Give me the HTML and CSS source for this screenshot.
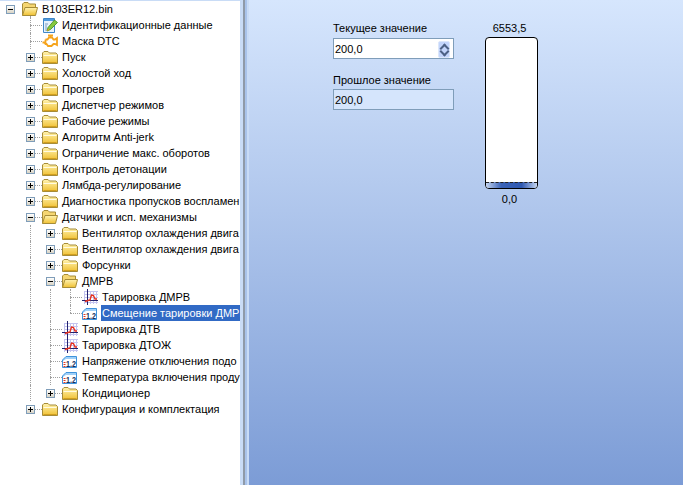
FILE: index.html
```html
<!DOCTYPE html>
<html lang="ru">
<head>
    <meta charset="UTF-8">
    <meta name="viewport" content="width=device-width, initial-scale=1.0">
    <title>B103ER12.bin</title>
    <link rel="stylesheet" href="styles.css">
</head>
<body>
    <svg class="defs" width="0" height="0">
        <defs>
            <linearGradient id="folderFill" x1="0" y1="0" x2="0" y2="1">
                <stop offset="0" stop-color="#fff3b0"/>
                <stop offset="1" stop-color="#f0c032"/>
            </linearGradient>
            <symbol id="folder" viewBox="0 0 16 16">
                <path d="M.5 14.5V4L2 2.5H6L7.5 4H14L15.5 5.5V14.5Z" fill="url(#folderFill)" stroke="#a68c38"/>
                <path d="M1.5 6.5H14.5" stroke="#fffbe2"/>
                <path d="M1.5 13.5H14.5" stroke="#d29f1e"/>
            </symbol>
            <symbol id="folderOpen" viewBox="0 0 16 16">
                <path d="M.5 14.5V3L2 1.5H6L7.5 3H13.5V7" fill="#f5d672" stroke="#a68c38"/>
                <path d="M.5 14.5L3 6.5H15.5L13.5 14.5Z" fill="url(#folderFill)" stroke="#a68c38"/>
            </symbol>
            <symbol id="form" viewBox="0 0 16 16">
                <path d="M1.5 1.5H12.5V15.5H1.5Z" fill="#e6f1fc" stroke="#3f86c8"/>
                <path d="M2 2H12V4H2Z" fill="#4f9ade"/>
                <path d="M3 7H6M3 9H5M3 11H5M3 13H7" stroke="#7a9cc0"/>
                <path d="M5 14L6 10.5L12.5 3L15.5 5.5L8.5 12.5Z" fill="#86c83e" stroke="#3c8a1e" stroke-width=".8"/>
                <path d="M5 14L6 11.5L7.5 13Z" fill="#e8a41c"/>
            </symbol>
            <symbol id="engine" viewBox="0 0 16 16">
                <path d="M3.5 6.5H5.5L7 4.5H10L11.5 6.5H13L15 5V12L13 11H11.5L9.5 13H6L4.5 11H3.5L2.5 9.5H0.5M3.5 6.5V11" fill="#fff" stroke="#f5a31c" stroke-width="1.8"/>
                <path d="M6 2.5H11M8.5 2.5V4.5" stroke="#f5a31c" stroke-width="1.8" fill="none"/>
            </symbol>
            <symbol id="chart" viewBox="0 0 16 16">
                <path d="M2 2.5H16M2 5.5H16M2 8.5H16M2 13.5H16M2.5 2V15M8.5 2V15M11.5 2V15M14.5 2V15" stroke="#c4c4f0"/>
                <path d="M0 11.5H16M5.5 0V16" stroke="#22226e"/>
                <path d="M3 12.5L6 11.5L8 11L9.5 6L11.5 6.5L13 10L15 10" fill="none" stroke="#e8301c" stroke-width="1.4"/>
            </symbol>
            <symbol id="number" viewBox="0 0 16 16">
                <path d="M4 3.5H14.5V14.5H.5V7Z" fill="#9fd0f8" stroke="#3f93dc"/>
                <path d="M4 6H14V14H1V8Z" fill="#fff"/>
                <path d="M1.5 9H3.5V10H1.5ZM1.5 11H3.5V12H1.5ZM1.5 13H3.5V14H1.5Z" fill="#e23a22"/>
                <text x="4" y="13.5" textLength="10" lengthAdjust="spacingAndGlyphs" class="ico-text">1.2</text>
            </symbol>
        </defs>
    </svg>

    <div class="tree">
        <div class="row"><i class="cell minus"></i><span class="cell stem-down"><svg class="ico ico-root"><use href="#folderOpen"/></svg></span><span class="label">B103ER12.bin</span></div>

        <div class="row"><i class="cell"></i><i class="cell tee"></i><svg class="ico"><use href="#form"/></svg><span class="label">Идентификационные данные</span></div>
        <div class="row"><i class="cell"></i><i class="cell tee"></i><svg class="ico"><use href="#engine"/></svg><span class="label">Маска DTC</span></div>
        <div class="row"><i class="cell"></i><i class="cell tee plus"></i><svg class="ico"><use href="#folder"/></svg><span class="label">Пуск</span></div>
        <div class="row"><i class="cell"></i><i class="cell tee plus"></i><svg class="ico"><use href="#folder"/></svg><span class="label">Холостой ход</span></div>
        <div class="row"><i class="cell"></i><i class="cell tee plus"></i><svg class="ico"><use href="#folder"/></svg><span class="label">Прогрев</span></div>
        <div class="row"><i class="cell"></i><i class="cell tee plus"></i><svg class="ico"><use href="#folder"/></svg><span class="label">Диспетчер режимов</span></div>
        <div class="row"><i class="cell"></i><i class="cell tee plus"></i><svg class="ico"><use href="#folder"/></svg><span class="label">Рабочие режимы</span></div>
        <div class="row"><i class="cell"></i><i class="cell tee plus"></i><svg class="ico"><use href="#folder"/></svg><span class="label">Алгоритм Anti-jerk</span></div>
        <div class="row"><i class="cell"></i><i class="cell tee plus"></i><svg class="ico"><use href="#folder"/></svg><span class="label">Ограничение макс. оборотов</span></div>
        <div class="row"><i class="cell"></i><i class="cell tee plus"></i><svg class="ico"><use href="#folder"/></svg><span class="label">Контроль детонации</span></div>
        <div class="row"><i class="cell"></i><i class="cell tee plus"></i><svg class="ico"><use href="#folder"/></svg><span class="label">Лямбда-регулирование</span></div>
        <div class="row"><i class="cell"></i><i class="cell tee plus"></i><svg class="ico"><use href="#folder"/></svg><span class="label">Диагностика пропусков воспламен</span></div>
        <div class="row"><i class="cell"></i><i class="cell tee minus"></i><svg class="ico"><use href="#folderOpen"/></svg><span class="label">Датчики и исп. механизмы</span></div>

        <div class="row"><i class="cell"></i><i class="cell line"></i><i class="cell tee plus"></i><svg class="ico"><use href="#folder"/></svg><span class="label">Вентилятор охлаждения двига</span></div>
        <div class="row"><i class="cell"></i><i class="cell line"></i><i class="cell tee plus"></i><svg class="ico"><use href="#folder"/></svg><span class="label">Вентилятор охлаждения двига</span></div>
        <div class="row"><i class="cell"></i><i class="cell line"></i><i class="cell tee plus"></i><svg class="ico"><use href="#folder"/></svg><span class="label">Форсунки</span></div>
        <div class="row"><i class="cell"></i><i class="cell line"></i><i class="cell tee minus"></i><svg class="ico"><use href="#folderOpen"/></svg><span class="label">ДМРВ</span></div>
        <div class="row"><i class="cell"></i><i class="cell line"></i><i class="cell line"></i><i class="cell tee"></i><svg class="ico"><use href="#chart"/></svg><span class="label">Тарировка ДМРВ</span></div>
        <div class="row"><i class="cell"></i><i class="cell line"></i><i class="cell line"></i><i class="cell elbow"></i><svg class="ico"><use href="#number"/></svg><span class="label selected">Смещение тарировки ДМРВ</span></div>
        <div class="row"><i class="cell"></i><i class="cell line"></i><i class="cell tee"></i><svg class="ico"><use href="#chart"/></svg><span class="label">Тарировка ДТВ</span></div>
        <div class="row"><i class="cell"></i><i class="cell line"></i><i class="cell tee"></i><svg class="ico"><use href="#chart"/></svg><span class="label">Тарировка ДТОЖ</span></div>
        <div class="row"><i class="cell"></i><i class="cell line"></i><i class="cell tee"></i><svg class="ico"><use href="#number"/></svg><span class="label">Напряжение отключения подо</span></div>
        <div class="row"><i class="cell"></i><i class="cell line"></i><i class="cell tee"></i><svg class="ico"><use href="#number"/></svg><span class="label">Температура включения проду</span></div>
        <div class="row"><i class="cell"></i><i class="cell line"></i><i class="cell elbow plus"></i><svg class="ico"><use href="#folder"/></svg><span class="label">Кондиционер</span></div>

        <div class="row"><i class="cell"></i><i class="cell elbow plus"></i><svg class="ico"><use href="#folder"/></svg><span class="label">Конфигурация и комплектация</span></div>
    </div>

    <div class="splitter"></div>

    <div class="panel">
        <div class="fields">
            <label class="field-title">Текущее значение</label>
            <div class="field">
                <span class="field-value">200,0</span>
                <div class="spin">
                    <span class="arrow up"></span>
                    <span class="arrow down"></span>
                </div>
            </div>
            <label class="field-title second">Прошлое значение</label>
            <div class="field readonly">
                <span class="field-value">200,0</span>
            </div>
        </div>
        <div class="gauge">
            <div class="gauge-top">6553,5</div>
            <div class="gauge-bar">
                <div class="gauge-fill"></div>
            </div>
            <div class="gauge-bottom">0,0</div>
        </div>
    </div>
</body>
</html>
```

FILE: styles.css
```css
* {
    box-sizing: border-box;
}
html, body {
    margin: 0;
    height: 100%;
    overflow: hidden;
}
body {
    display: flex;
    font-family: "Liberation Sans", Arial, sans-serif;
    font-size: 11px;
    color: #000;
    background: #fff;
}
.defs {
    position: absolute;
}

/* tree */
.tree {
    width: 240px;
    flex: none;
    overflow: hidden;
    background: #fff;
    border-top: 1px solid #c9dcf6;
}
.row {
    display: flex;
    align-items: center;
    height: 16px;
}
.cell {
    position: relative;
    display: block;
    width: 20px;
    height: 16px;
    flex: none;
}
.line::before, .tee::before, .elbow::before, .stem-down::before {
    content: "";
    position: absolute;
    left: 10px;
    top: 0;
    height: 16px;
    border-left: 1px dotted #a0a0a0;
}
.elbow::before {
    height: 8px;
}
.stem-down {
    width: 18px;
}
.stem-down::before {
    top: 15px;
    height: 1px;
}
.tee::after, .elbow::after {
    content: "";
    position: absolute;
    left: 10px;
    top: 8px;
    width: 12px;
    border-top: 1px dotted #a0a0a0;
}
/* expander box drawn with gradients over the connector lines */
.plus, .minus {
    background-repeat: no-repeat;
}
.minus {
    background-image:
        linear-gradient(#000, #000),
        linear-gradient(#fff, #d8d3c4),
        linear-gradient(#7f9db9, #7f9db9);
    background-size: 5px 1px, 7px 7px, 9px 9px;
    background-position: 8px 8px, 7px 5px, 6px 4px;
}
.plus {
    background-image:
        linear-gradient(#000, #000),
        linear-gradient(#000, #000),
        linear-gradient(#fff, #d8d3c4),
        linear-gradient(#7f9db9, #7f9db9);
    background-size: 5px 1px, 1px 5px, 7px 7px, 9px 9px;
    background-position: 8px 8px, 10px 6px, 7px 5px, 6px 4px;
}
.tee.plus::before, .tee.minus::before, .elbow.plus::before {
    z-index: -1;
}
.tee.plus::after, .tee.minus::after, .elbow.plus::after {
    left: 15px;
    width: 7px;
}
.ico {
    width: 16px;
    height: 16px;
    flex: none;
    margin-left: 2px;
}
.ico-root {
    position: absolute;
    left: 0;
    top: 0;
}
.ico-text {
    font-family: "Liberation Sans", Arial, sans-serif;
    font-size: 9.5px;
    font-weight: bold;
    fill: #15305c;
}
.label {
    flex: 1;
    min-width: 0;
    height: 16px;
    line-height: 16px;
    margin-left: 3px;
    padding-left: 1px;
    white-space: nowrap;
    overflow: hidden;
}
.selected {
    color: #fff;
    background: #316ac5;
}

/* divider between tree and panel */
.splitter {
    width: 9px;
    flex: none;
    background: linear-gradient(to right,
        #c9dcf6 0, #c9dcf6 3px,
        #8f9aa8 3px, #8f9aa8 5px,
        #a9c3ea 5px, #a9c3ea 7px,
        #c9dcf6 7px, #c9dcf6 9px);
}

/* right side */
.panel {
    flex: 1;
    display: flex;
    align-items: flex-start;
    padding: 20px 0 0 84px;
    gap: 31px;
    background: linear-gradient(to bottom, #d6e6fd, #7c9cd6);
}
.fields {
    width: 121px;
}
.field-title {
    display: block;
    height: 16px;
    line-height: 16px;
}
.field-title.second {
    margin-top: 13px;
}
.field {
    display: flex;
    align-items: center;
    justify-content: space-between;
    height: 21px;
    margin-top: 2px;
    padding: 0 3px 0 1px;
    background: #fff;
    border: 1px solid #7f9db9;
}
.readonly {
    margin-top: 1px;
    background: #d5e5fc;
}
.spin {
    display: flex;
    flex-direction: column;
    width: 12px;
    height: 17px;
    margin-top: 1px;
    background: #c3d5fb;
    border: 1px solid #dce7fb;
    border-radius: 2px;
}
.arrow {
    display: block;
    height: 8px;
    position: relative;
}
.arrow::after {
    content: "";
    position: absolute;
    left: 2px;
    width: 5px;
    height: 5px;
    transform: rotate(45deg);
    border: solid #4d6185;
}
.up::after {
    top: 3px;
    border-width: 2px 0 0 2px;
}
.down::after {
    top: -1px;
    border-width: 0 2px 2px 0;
}
.gauge {
    width: 53px;
    text-align: center;
}
.gauge-top {
    height: 16px;
    margin-bottom: 1px;
    padding-right: 4px;
    line-height: 16px;
}
.gauge-bar {
    display: flex;
    flex-direction: column;
    justify-content: flex-end;
    height: 152px;
    background: #fff;
    border: 1px solid #000;
    border-radius: 4px;
    overflow: hidden;
}
.gauge-fill {
    height: 6px;
    border-top: 1px dashed #222;
    background: linear-gradient(to right, #c5d5f0, #3a63b8 30%, #2f58b0 70%, #c5d5f0);
}
.gauge-bottom {
    height: 16px;
    margin-top: 2px;
    padding-right: 4px;
    line-height: 16px;
}
```
